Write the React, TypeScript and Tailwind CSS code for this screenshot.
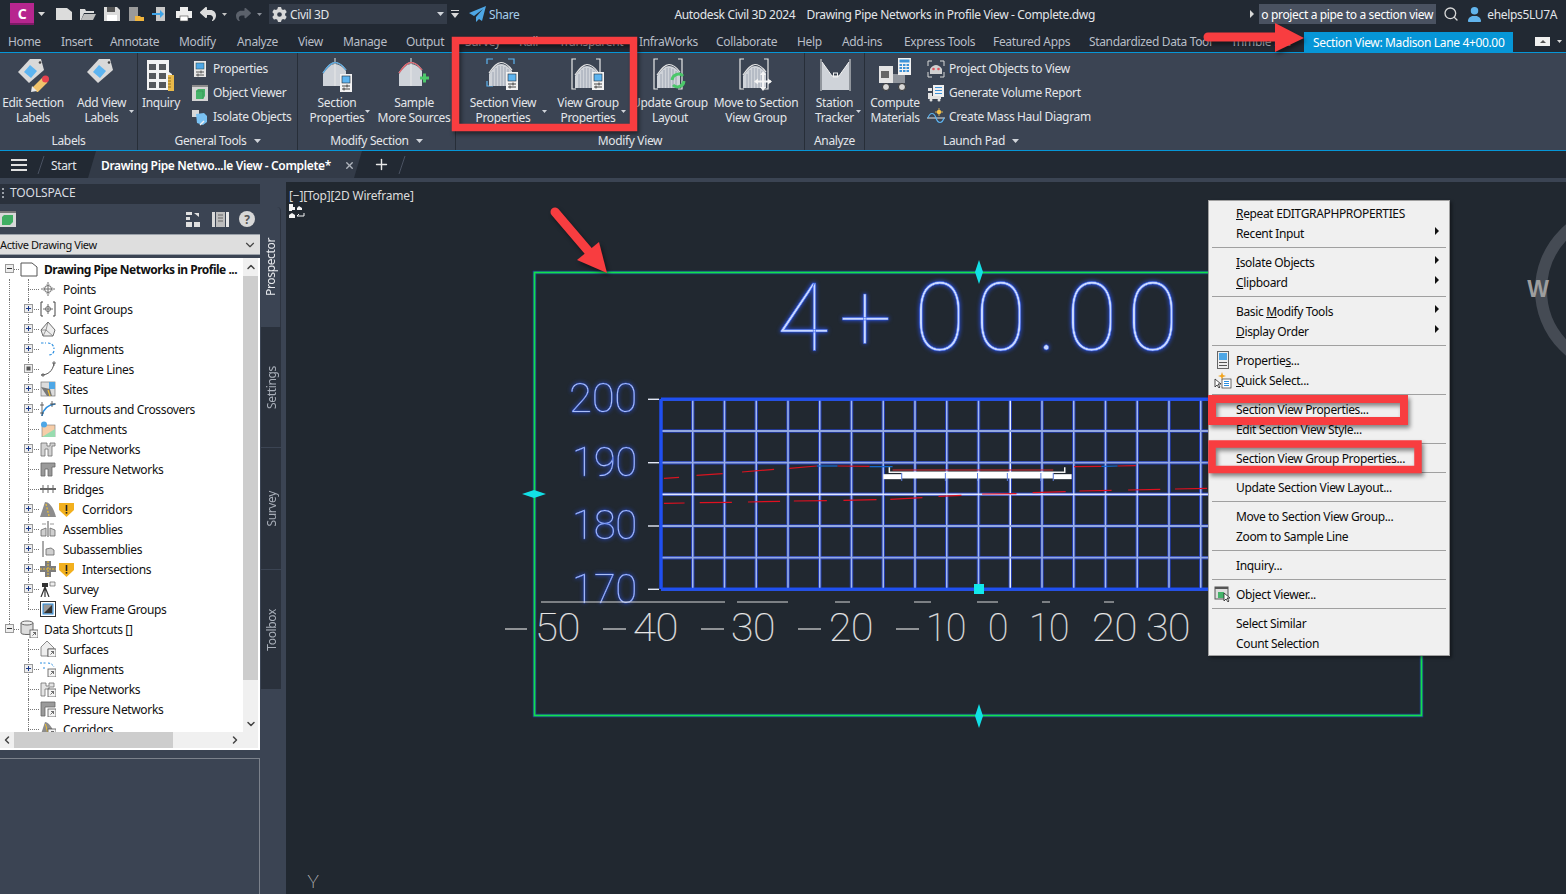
import React from "react";
import { FaGear, FaReply, FaShare, FaUser } from "react-icons/fa6";
import { ChevronDown, ChevronUp, ChevronLeft, ChevronRight, Search, X as CloseIcon, Plus } from "lucide-react";

const FONT = "font-['Noto_Sans','Liberation_Sans',sans-serif]";

/* ---------- ribbon icon pieces ---------- */
const Badge = ({ x, y }: { x: number; y: number }) => (
  <g transform={`translate(${x} ${y})`}>
    <rect width="12" height="18" fill="#f2f2f2" />
    <rect x="2" y="2" width="8" height="7" fill="#5db4f0" stroke="#1d2a38" strokeWidth=".6" />
    <path d="M2 12h8M2 15h8" stroke="#444" strokeWidth="1" />
    <path d="M7 10.5v3M4 13.5v3" stroke="#444" strokeWidth="1" />
  </g>
);
const Arch = ({ x = 0, stripes = false }: { x?: number; stripes?: boolean }) => (
  <g transform={`translate(${x} 0)`}>
    <path d="M2 28V16C7 9 10 6 14 6s8 3 11 7v15z" fill="#cfd3d9" />
    {stripes && <path d="M6 28V14M9 28V10M12 28V8M15 28V8M18 28V9M21 28V11" stroke="#8f9aa8" strokeWidth=".8" />}
    <path d="M2 15C7 8 10 4.500 14 4.500s8 3.500 11 7.500" fill="none" stroke="#e8e8e8" strokeWidth="1.200" />
  </g>
);
const Ic = ({ children, w = 34, h = 34 }: { children: React.ReactNode; w?: number; h?: number }) => (
  <svg width={w} height={h} viewBox={`0 0 ${w} ${h}`} className="block shrink-0">{children}</svg>
);
const Tag = ({ pencil }: { pencil?: boolean }) => (
  <Ic>
    <path d="M25 1 28 12 13 25 2 14 14 1z" fill="#d9d9d9" />
    <path d="M14 7 21 13 15 20 8 14z" fill="#5db4f0" />
    <circle cx="24" cy="4.500" r="1.300" fill="#444" />
    {pencil && (
      <g>
        <path d="M29 22 19 32" stroke="#f0c36b" strokeWidth="7" />
        <path d="M16 28 21 33 15 34z" fill="#e8e8e8" />
        <circle cx="29.500" cy="21" r="3.500" fill="#e8434f" />
      </g>
    )}
  </Ic>
);
const Inquiry = () => (
  <Ic>
    <path d="M3 2h22v12l3 2v16H3z" fill="#f3f3f3" />
    {[5, 15].map((x) => [6, 15, 24].map((y) => <rect key={x + "" + y} x={x} y={y} width="7" height="6" fill="#55585c" />))}
    <rect x="24" y="17" width="6" height="16" fill="#e9b949" />
    <path d="M24 20h3M24 23h3M24 26h3M24 29h3" stroke="#7a5c18" strokeWidth=".8" />
  </Ic>
);
const SectionIc = () => (
  <Ic>
    <Arch x={1} />
    <path d="M15 0v28" stroke="#e8e8e8" strokeWidth="1" />
    <path d="M3 15C8 8 11 4.500 15 4.500s8 3.500 11 7.500" fill="none" stroke="#4aa3e0" strokeWidth="1.200" />
    <Badge x={20} y={16} />
  </Ic>
);
const SampleIc = () => (
  <Ic>
    <Arch x={0} />
    <path d="M14 0v28" stroke="#e8e8e8" strokeWidth="1" />
    <path d="M2 15C7 8 10 4.500 14 4.500s8 3.500 11 7.500" fill="none" stroke="#e0555f" strokeWidth="1.200" />
    <path d="M23 20h9M27.500 15.500v9" stroke="#4cc76a" strokeWidth="3" />
  </Ic>
);
const Brackets = ({ blue }: { blue?: boolean }) =>
  blue ? (
    <path d="M1 6V1h6M22 1h6v5M1 23v5h6" fill="none" stroke="#5db4f0" strokeWidth="1.200" />
  ) : (
    <path d="M5 1H1v30h4M25 1h4v30h-4" fill="none" stroke="#e8e8e8" strokeWidth="1.200" />
  );
const SVPIc = () => (
  <Ic><Brackets blue /><Arch x={1} stripes /><Badge x={20} y={14} /></Ic>
);
const VGPIc = () => (
  <Ic><Brackets /><g transform="translate(2 2)"><Arch stripes /></g><Badge x={21} y={14} /></Ic>
);
const UpdIc = () => (
  <Ic>
    <Brackets /><g transform="translate(2 2)"><Arch stripes /></g>
    <path d="M19 22a6.500 6.500 0 0 1 11-4" fill="none" stroke="#4cc76a" strokeWidth="3" />
    <path d="M31 23a6.500 6.500 0 0 1-11 4" fill="none" stroke="#4cc76a" strokeWidth="3" />
  </Ic>
);
const MoveIc = () => (
  <Ic>
    <Brackets /><g transform="translate(2 2)"><Arch stripes /></g>
    <path d="M24 16v15M17 23.500h15" stroke="#f4f4f4" strokeWidth="2" />
    <path d="M24 13l3 4h-6zM24 33l3-4h-6zM15 23.500l4-3v6zM33 23.500l-4-3v6z" fill="#f4f4f4" />
  </Ic>
);
const StationIc = () => (
  <Ic>
    <path d="M3 1v32M32 1v32" stroke="#e8e8e8" strokeWidth="1" />
    <path d="M4 4 14 18v14H4zM31 4 21 18v14h10z" fill="#cfd3d9" />
    <path d="M14 18h7v14h-7z" fill="#cfd3d9" />
    <path d="M4 4l10 14h7L31 4" fill="none" stroke="#f2f2f2" strokeWidth="1" />
    <rect x="15.500" y="15" width="4" height="4" fill="none" stroke="#f2f2f2" />
  </Ic>
);
const ComputeIc = () => (
  <Ic>
    <path d="M1 8h14v17H1z" fill="#e4e4e4" />
    <path d="M3 13h8v7H3z" fill="#666" />
    <path d="M15 16h12v9H15z" fill="#8f949c" />
    <circle cx="8" cy="29" r="3.500" fill="#d8d8d8" stroke="#333" />
    <circle cx="24" cy="29" r="3.500" fill="#d8d8d8" stroke="#333" />
    <rect x="20" y="0" width="13" height="17" fill="#f2f2f2" />
    <rect x="21.500" y="1.500" width="10" height="3" fill="#3f93d8" />
    {[21.5, 25, 28.5].map((x) => [6, 9, 12].map((y) => <rect key={x + "-" + y} x={x} y={y} width="2.500" height="2" fill="#3f93d8" />))}
  </Ic>
);

/* small ribbon icons, 18px */
const S = ({ children, s = 18 }: { children: React.ReactNode; s?: number }) => (
  <svg width={s} height={s} viewBox="0 0 18 18" className="block shrink-0">{children}</svg>
);
const PropSm = () => (
  <S>
    <rect x="3" y="1" width="12" height="16" fill="#e8e8e8" />
    <rect x="5" y="3" width="8" height="6" fill="#4ea7e6" stroke="#244" strokeWidth=".5" />
    <path d="M5 12h8M5 15h8M10 10.500v3M7 13.500v3" stroke="#555" strokeWidth="1" />
  </S>
);
const ObjSm = () => (
  <S>
    <rect x="1" y="1" width="16" height="16" fill="#d5d5d5" />
    <rect x="1" y="1" width="16" height="2" fill="#8c8c8c" />
    <path d="M5 7l2-2h7v7l-2 3H5z" fill="#46b36a" />
    <path d="M5 7h7v8" fill="none" stroke="#2f8a4d" strokeWidth=".6" />
  </S>
);
const IsoSm = () => (
  <S>
    <rect x="1" y="2" width="7" height="7" fill="#d8d8d8" />
    <path d="M5 6l8-1 3 3v6l-4 3-6-2z" fill="#79c1f2" />
    <path d="M9 17l4-4" stroke="#f1f1f1" strokeWidth="1.500" />
  </S>
);
const ProjSm = () => (
  <S>
    <path d="M1 6V1h4M13 1h4v5M1 12v5h4M13 17h4v-5" fill="none" stroke="#d8d8d8" strokeWidth="1" />
    <path d="M3 14V9c2-3 4-4 6-4s4 1 6 4v5z" fill="#d0d0d0" />
    <circle cx="6.500" cy="9" r="1.300" fill="#e0555f" />
    <circle cx="11.500" cy="9" r="1.300" fill="#e0555f" />
  </S>
);
const GenSm = () => (
  <S>
    <rect x="6" y="1" width="11" height="12" fill="#f0f0f0" />
    <path d="M8 3.500h7M8 6.500h7M8 9.500h7" stroke="#3f93d8" strokeWidth="1.200" />
    <path d="M1 4h4v3H1zM1 9h4v6H1zM5 12h9v3H5z" fill="#e2e2e2" />
    <circle cx="4" cy="16" r="1.500" fill="#e2e2e2" />
    <circle cx="12" cy="16" r="1.500" fill="#e2e2e2" />
  </S>
);
const HaulSm = () => (
  <S>
    <path d="M0 10h18" stroke="#e2e2e2" strokeWidth="1" />
    <path d="M1 10c2-6 6-6 8 0 2 6 6 6 8 0" fill="none" stroke="#5db4f0" strokeWidth="1.200" />
    <circle cx="12" cy="4" r="2.200" fill="#f5c34b" />
    <path d="M12 0v8M8 4h8" stroke="#f5c34b" strokeWidth=".8" />
  </S>
);

/* ---------- ribbon structure ---------- */
const Caret = () => (
  <svg width="7" height="4" viewBox="0 0 7 4" className="inline-block"><path d="M0 0h7L3.500 4z" fill="#d0d4da" /></svg>
);
const Big = ({ w, icon, a, b, drop, dx = "right-[2px]" }: { w: string; icon: React.ReactNode; a: string; b: string; drop?: boolean; dx?: string }) => (
  <div className={`relative flex flex-col items-center ${w}`}>
    {icon}
    <div className="mt-[3px] whitespace-nowrap text-center">{a}</div>
    <div className="whitespace-nowrap text-center">{b}</div>
    {drop && <span className={`absolute top-[52px] leading-none ${dx}`}><svg width="5" height="3" viewBox="0 0 5 3" className="block"><path d="M0 0h5L2.500 3z" fill="#d0d4da" /></svg></span>}
  </div>
);
const Small = ({ icon, t }: { icon: React.ReactNode; t: string }) => (
  <div className="flex h-6 items-center gap-[4px] whitespace-nowrap">{icon}<span className="-mt-[1px]">{t}</span></div>
);
const Group = ({ w, label, caret, children, last }: { w: string; label: string; caret?: boolean; children: React.ReactNode; last?: boolean }) => (
  <div className={`flex h-full flex-col ${w} ${last ? "" : "border-r border-[#272e38]"}`}>
    <div className="flex flex-1 pt-[5px]">{children}</div>
    <div className="flex h-[18px] items-center justify-center gap-[7px] pb-[1px]">
      <span>{label}</span>{caret && <Caret />}
    </div>
  </div>
);

const tabs = [
  ["Home", "w-[53px]"], ["Insert", "w-[49px]"], ["Annotate", "w-[69px]"], ["Modify", "w-[58px]"],
  ["Analyze", "w-[61px]"], ["View", "w-[45px]"], ["Manage", "w-[63px]"], ["Output", "w-[59px]"],
  ["Survey", "w-[54px]"], ["Rail", "w-[40px]"], ["Transparent", "w-[80px]"], ["InfraWorks", "w-[77px]"],
  ["Collaborate", "w-[81px]"], ["Help", "w-[45px]"], ["Add-ins", "w-[62px]"], ["Express Tools", "w-[89px]"],
  ["Featured Apps", "w-[96px]"], ["Standardized Data Tool", "w-[142px]"], ["Trimble Ltd", "w-[73px]"],
];

/* ---------- tree ---------- */
const T = ({ children }: { children: React.ReactNode }) => (
  <svg width="16" height="16" viewBox="0 0 16 16" className="block shrink-0">{children}</svg>
);
const G = "#6f6f6f";
const PointI = () => <T><circle cx="8" cy="8" r="3.500" fill="none" stroke={G} /><path d="M8 1v14M1 8h14" stroke={G} /><path d="M8 1l2 3H6zM8 15l2-3H6zM1 8l3-2v4zM15 8l-3-2v4z" fill="#bbb" /></T>;
const GroupI = () => <T><path d="M3 1H1v14h2M13 1h2v14h-2" fill="none" stroke="#444" /><circle cx="8" cy="8" r="2.500" fill="none" stroke={G} /><path d="M8 3v10M3 8h10" stroke={G} /></T>;
const SurfI = () => <T><path d="M8 1 15 9l-2 6H3L1 9z" fill="#eee" stroke={G} /><path d="M8 1 6 9l7 6M6 9 3 15M1 9h5" fill="none" stroke={G} strokeWidth=".7" /></T>;
const AlignI = () => <T><path d="M1 2h5M8 2c4 0 6 3 6 6M14 10c-1 3-3 4-6 4" fill="none" stroke="#2a8ee0" strokeWidth="1.200" strokeDasharray="2.500 1.500" /></T>;
const FeatI = () => <T><path d="M1 14c7 0 12-4 13-12" fill="none" stroke="#555" /><path d="M14 0v5M12 2h4M3 12v4M1 14h4" stroke="#555" strokeWidth=".8" /></T>;
const SiteI = () => <T><rect x="1" y="1" width="14" height="14" fill="#ddd" stroke="#777" strokeWidth=".7" /><path d="M9 1h6v7H9z" fill="#4ea7e6" /><path d="M1 6l9 2 2 7H7z" fill="#777" /><path d="M8 9l2 6" stroke="#f2c230" strokeWidth="1.200" /></T>;
const TurnI = () => <T><path d="M2 15C3 8 8 4 15 3" fill="none" stroke="#2a8ee0" strokeWidth="1.500" /><path d="M2 1v14M0 4h4M0 12h4M12 0v6M10 3h6" stroke="#444" strokeWidth=".8" /></T>;
const CatchI = () => <T><rect x="2" y="4" width="13" height="12" fill="#f6cda8" stroke="#777" strokeWidth=".6" /><path d="M2 16 15 8v8z" fill="#98dcb0" /><circle cx="4" cy="3.500" r="3" fill="#4ea7e6" /></T>;
const PipeI = () => <T><path d="M1 2h6v3h3V2h5v3h-3v10h-4V8H5v7H1z" fill="#d2d2d2" stroke={G} strokeWidth=".8" /></T>;
const PressI = () => <T><path d="M1 2h14v4h-3v9H8V8H5v7H1z" fill="#9a9a9a" stroke="#666" strokeWidth=".8" /></T>;
const BridgeI = () => <T><path d="M0 8h16" stroke="#666" strokeWidth="2" /><path d="M3 4v8M8 4v8M13 4v8" stroke="#666" /></T>;
const CorrI = () => <T><path d="M0 16 5 1c5 0 9 7 11 15z" fill="#8c8c8c" /><path d="M6 3l3 12" stroke="#f2c230" strokeWidth="1.200" strokeDasharray="2 1.500" /></T>;
const AsmI = () => <T><path d="M8 0v16" stroke="#555" /><path d="M1 9l5-2v8H1zM15 9l-5-2v8h5z" fill="#cfcfcf" stroke="#666" strokeWidth=".8" /><path d="M2 3h4M10 3h4" stroke="#999" /></T>;
const SubI = () => <T><path d="M3 0v16" stroke="#555" /><path d="M6 8l5-1 3 2v5H6z" fill="#cfcfcf" stroke="#666" strokeWidth=".8" /></T>;
const InterI = () => <T><path d="M5 0h6v5h5v6h-5v5H5v-5H0V5h5z" fill="#7d7d7d" /><path d="M8 0v16M0 8h16" stroke="#f2c230" strokeWidth="1" strokeDasharray="2 1" /></T>;
const SurvI = () => <T><path d="M5 6 1 16M5 6l4 10M5 6v10" stroke="#333" strokeWidth="1.200" /><rect x="2" y="2" width="6" height="4" fill="#333" /><path d="M10 1h5v4h-5z" fill="#eee" stroke="#666" strokeWidth=".7" /></T>;
const FrameI = () => <T><rect x=".5" y=".5" width="15" height="15" fill="#fff" stroke="#333" /><rect x="3" y="3" width="10" height="10" fill="#999" stroke="#2a8ee0" /><path d="M4 12 12 4v8z" fill="#333" /></T>;
const Arrow = () => <g><rect x="8" y="8" width="8" height="8" fill="#f4f4f4" stroke="#555" strokeWidth=".8" /><path d="M10.500 13.500l3-3M11 10.500h2.500V13" fill="none" stroke="#333" strokeWidth=".7" /></g>;
const DSurf = () => <T><path d="M7 0l7 7v1H8v7H1V6z" fill="#eee" stroke={G} strokeWidth=".8" /><Arrow /></T>;
const DAlign = () => <T><path d="M0 2h7M8 2c3 0 5 2 6 4M3 7h3" fill="none" stroke="#2a8ee0" strokeDasharray="2 1.500" /><Arrow /></T>;
const DPipe = () => <T><path d="M1 2h5v3h3V2h5v4H9v2H5v7H1z" fill="#e4e4e4" stroke={G} strokeWidth=".8" /><Arrow /></T>;
const DPress = () => <T><path d="M1 1h14v5H5v9H1z" fill="#9a9a9a" stroke="#666" strokeWidth=".8" /><Arrow /></T>;
const DCorr = () => <T><path d="M0 16 5 1c3 0 6 4 8 8H8v7z" fill="#8c8c8c" /><path d="M5.500 3l2 8" stroke="#f2c230" /><Arrow /></T>;
const Shield = () => (
  <svg width="15" height="15" viewBox="0 0 15 15" className="block shrink-0">
    <path d="M0 1h15v7l-7.500 7L0 8z" fill="#f2b01e" />
    <path d="M7.500 3v6" stroke="#222" strokeWidth="1.600" /><rect x="6.700" y="10" width="1.600" height="1.600" fill="#222" />
  </svg>
);

type Row = { t: string; e?: "p" | "d"; i: React.ReactNode; w?: boolean };
const rootRows: Row[] = [
  { t: "Points", i: <PointI /> }, { t: "Point Groups", e: "p", i: <GroupI /> }, { t: "Surfaces", e: "p", i: <SurfI /> },
  { t: "Alignments", e: "p", i: <AlignI /> }, { t: "Feature Lines", e: "d", i: <FeatI /> }, { t: "Sites", e: "p", i: <SiteI /> },
  { t: "Turnouts and Crossovers", e: "p", i: <TurnI /> }, { t: "Catchments", i: <CatchI /> }, { t: "Pipe Networks", e: "p", i: <PipeI /> },
  { t: "Pressure Networks", i: <PressI /> }, { t: "Bridges", i: <BridgeI /> }, { t: "Corridors", e: "p", i: <CorrI />, w: true },
  { t: "Assemblies", e: "p", i: <AsmI /> }, { t: "Subassemblies", e: "p", i: <SubI /> }, { t: "Intersections", e: "p", i: <InterI />, w: true },
  { t: "Survey", e: "p", i: <SurvI /> }, { t: "View Frame Groups", i: <FrameI /> },
];
const shortRows: Row[] = [
  { t: "Surfaces", i: <DSurf /> }, { t: "Alignments", e: "p", i: <DAlign /> }, { t: "Pipe Networks", i: <DPipe /> },
  { t: "Pressure Networks", i: <DPress /> }, { t: "Corridors", i: <DCorr /> },
];
const Exp = ({ k }: { k?: "p" | "d" | "m" }) => (
  <svg width="9" height="9" viewBox="0 0 9 9" className="block">
    <rect x=".5" y=".5" width="8" height="8" fill="#eee" stroke="#9a9a9a" />
    {k === "p" && <path d="M2 4.500h5M4.500 2v5" stroke="#1a3a8a" />}
    {k === "m" && <path d="M2 4.500h5" stroke="#333" />}
    {k === "d" && <rect x="2.500" y="2.500" width="4" height="4" fill="#555" />}
  </svg>
);
const TreeRow = ({ r, root, last }: { r: Row; root: boolean; last?: boolean }) => (
  <div className="flex h-5 items-center whitespace-nowrap text-[#111]">
    <div className="h-5 w-[28px] shrink-0 pl-[9px]">
      {root && <div className="h-full border-l border-dotted border-[#777]" />}
    </div>
    <div className="relative h-5 w-[12px] shrink-0">
      <div className={`${last ? "h-[10px]" : "h-5"} border-l border-dotted border-[#777]`} />
      <div className="absolute left-0 top-[10px] w-[11px] border-t border-dotted border-[#777]" />
      {r.e && <div className="absolute -left-[4px] top-[5px]"><Exp k={r.e} /></div>}
    </div>
    {r.i}
    {r.w ? (
      <><span className="ml-[3px]"><Shield /></span><span className="ml-[8px]">{r.t}</span></>
    ) : (
      <span className="ml-[7px]">{r.t}</span>
    )}
  </div>
);
const RootRow = ({ label, bold, icon, connect }: { label: string; bold?: boolean; icon: React.ReactNode; connect?: boolean }) => (
  <div className="flex h-5 items-center whitespace-nowrap text-[#111]">
    <div className="relative h-5 w-[20px] shrink-0">
      <div className={`absolute left-[9px] top-0 border-l border-dotted border-[#777] ${connect ? "h-[5px]" : "hidden"}`} />
      <div className="absolute left-[5px] top-[5px]"><Exp k="m" /></div>
      <div className="absolute left-[14px] top-[10px] w-[5px] border-t border-dotted border-[#777]" />
    </div>
    {icon}
    <span className={`ml-[3px] ${bold ? "font-bold tracking-[-0.5px]" : ""}`}>{label}</span>
  </div>
);

/* ---------- context menu ---------- */
type M = { t?: React.ReactNode; sub?: boolean; icon?: React.ReactNode } | null;
function PropMenu() {
  return (
    <S>
      <rect x="3.500" y=".5" width="11" height="17" fill="#eee" stroke="#666" />
      <rect x="5" y="2" width="8" height="7" fill="#4ea7e6" />
      <path d="M5 11.500h8M5 14.500h8" stroke="#555" />
    </S>
  );
}
function QuickMenu() {
  return (
    <S>
      <path d="M1 8v8l2-2 2 3 1-1-2-3h3z" fill="#fff" stroke="#222" strokeWidth=".8" />
      <path d="M8 1l1 3 3 1-3 1-1 3-1-3-3-1 3-1z" fill="#f2a51e" />
      <rect x="8" y="8" width="9" height="9" fill="#fff" stroke="#333" strokeWidth=".7" />
      <path d="M10 10.500h5M10 12.500h5M10 14.500h5" stroke="#2a8ee0" />
    </S>
  );
}
function ObjMenu() {
  return (
    <S>
      <rect x="1" y="2" width="13" height="12" fill="#ddd" stroke="#555" />
      <rect x="1" y="2" width="13" height="2" fill="#555" />
      <path d="M4 7h6v6H4z" fill="#46b36a" />
      <path d="M10 8v8l2-2 2 3 1-1-2-3h3z" fill="#fff" stroke="#222" strokeWidth=".8" />
    </S>
  );
}
const menu: M[] = [
  { t: <><u>R</u>epeat EDITGRAPHPROPERTIES</> }, { t: "Recent Input", sub: true }, null,
  { t: <><u>I</u>solate Objects</>, sub: true }, { t: <><u>C</u>lipboard</>, sub: true }, null,
  { t: <>Basic <u>M</u>odify Tools</>, sub: true }, { t: <><u>D</u>isplay Order</>, sub: true }, null,
  { t: <>Propertie<u>s</u>...</>, icon: <PropMenu /> }, { t: <><u>Q</u>uick Select...</>, icon: <QuickMenu /> }, null,
  { t: "Section View Properties..." }, { t: "Edit Section View Style..." }, null,
  { t: "Section View Group Properties..." }, null,
  { t: "Update Section View Layout..." }, null,
  { t: "Move to Section View Group..." }, { t: "Zoom to Sample Line" }, null,
  { t: "Inquiry..." }, null,
  { t: "Object Viewer...", icon: <ObjMenu /> }, null,
  { t: "Select Similar" }, { t: "Count Selection" },
];

/* ---------- drawing ---------- */
const PX = (p: number) => 500 + p / 2.178;
const PY = (p: number) => 370 + p / 3;
const gridH = [399.3, 431, 462.7, 494.3, 526, 557.7, 589.3];
const gridV = Array.from({ length: 18 }, (_, i) => 661 + 31.75 * i);
const redTop = [[357, 325, 390, 322], [428, 316, 485, 311], [527, 306, 597, 298], [630, 295, 690, 288], [735, 288, 805, 289], [1250, 290, 1310, 289], [1345, 288, 1385, 287]];
const blueTop = [[690, 288, 735, 288], [805, 290, 855, 290], [1310, 289, 1345, 288]];
const redLow = [[357, 400, 402, 399], [435, 398, 505, 397], [540, 396, 610, 394], [640, 393, 712, 392], [748, 391, 820, 389], [850, 388, 920, 383], [955, 379, 1005, 376], [1050, 372, 1125, 371], [1160, 368, 1232, 365], [1262, 363, 1332, 361], [1368, 360, 1438, 358], [1470, 357, 1540, 355]];
const botTicks = [[541, 725], [737, 788], [835, 850], [914, 931], [977, 998], [1042, 1050], [1104, 1114]];
const botLabels: [string, number, number][] = [["50", 535, 45], ["40", 633, 45], ["30", 731, 44], ["20", 829, 44], ["10", 926, 40], ["0", 988, 20], ["10", 1029, 40], ["20", 1092, 45], ["30", 1146, 44]];
const botDash = [[505, 527], [603, 626], [701, 724], [798, 821], [896, 919]];
const txt = "font-['Roboto','Liberation_Sans',sans-serif]";

const Drawing = () => (
  <svg viewBox="286 182 1280 712" className="absolute inset-0 h-full w-full">
    {/* compass */}
    <circle cx="1620" cy="290" r="79" fill="none" stroke="#454b54" strokeWidth="12" />
    <text x="1538" y="297" textAnchor="middle" fontSize="23" fontWeight="700" fill="#9e9e9e" className="font-['Liberation_Sans',sans-serif]">W</text>
    {/* extents frame */}
    <rect x="534.500" y="272.500" width="887" height="443" fill="none" stroke="#203a90" strokeWidth="3.500" />
    <rect x="534.500" y="272.500" width="887" height="443" fill="none" stroke="#12e04a" strokeWidth="1.800" />
    {/* title */}
    <text y="350" x="777 839 914 975 1037 1066 1127" fontSize="94" fontWeight="100" fill="#c8d8ff" stroke="#2a55e8" strokeWidth=".5" className={`${txt} drop-shadow-[0_0_2px_#2a55ff]`}>4+00.00</text>
    {/* grid */}
    {gridV.map((x) => <path key={x} d={`M${x} 399V589`} stroke="#233cb0" strokeWidth="3.500" />)}
    {gridH.map((y) => <path key={y} d={`M661 ${y}H1210`} stroke="#233cb0" strokeWidth="3.500" />)}
    {gridV.map((x, i) => <path key={x} d={`M${x} 399V589`} stroke={i === 11 ? "#e4ecff" : "#a3b8ee"} strokeWidth="1.500" />)}
    {gridH.map((y, i) => <path key={y} d={`M661 ${y}H1210`} stroke={i === 3 ? "#dfe6ff" : "#93a8e0"} strokeWidth="1.800" />)}
    <path d="M661 399.300H1210M661 589.300H1210M661 399V589" stroke="#1f50f0" strokeWidth="3" />
    {[399.3, 462.7, 526, 589.3].map((y) => <path key={y} d={`M648 ${y}H659`} stroke="#e4e8f4" strokeWidth="1.400" />)}
    {/* axis labels */}
    {([["200", 412, 569, 68], ["190", 476, 572, 65], ["180", 539, 572, 65], ["170", 603, 572, 65]] as [string, number, number, number][]).map(([t, y, x, w]) => (
      <text key={t} x={x} y={y} textLength={w} lengthAdjust="spacingAndGlyphs" fontSize="40" fontWeight="100" fill="#d4e0ff" stroke="#3a62e8" strokeWidth=".35" className={`${txt} drop-shadow-[0_0_2px_#2a55ff]`}>{t}</text>
    ))}
    {/* section lines */}
    {redTop.map((s, i) => <path key={i} d={`M${PX(s[0])} ${PY(s[1])}L${PX(s[2])} ${PY(s[3])}`} stroke="#d81420" strokeWidth="1.200" />)}
    {blueTop.map((s, i) => <path key={i} d={`M${PX(s[0])} ${PY(s[1])}L${PX(s[2])} ${PY(s[3])}`} stroke="#1670d8" strokeWidth="1.200" />)}
    {redLow.map((s, i) => <path key={i} d={`M${PX(s[0])} ${PY(s[1])}L${PX(s[2])} ${PY(s[3])}`} stroke="#e01020" strokeWidth="1.200" />)}
    {/* road */}
    <path d={`M${PX(848)} ${PY(292)}v5h${(1230 - 848) / 2.178}v-5`} fill="none" stroke="#f4f4f4" strokeWidth="1.500" />
    <path d={`M${PX(855)} ${PY(300)}H${PX(1205)}`} stroke="#e02a30" strokeWidth="1" />
    <path d={`M${PX(835)} ${PY(320)}H${PX(875)}`} stroke="#fff" strokeWidth="5" />
    <path d={`M${PX(875)} ${PY(316)}H${PX(1205)}`} stroke="#fff" strokeWidth="6.500" />
    <path d={`M${PX(1205)} ${PY(320)}H${PX(1245)}`} stroke="#fff" strokeWidth="5" />
    {[875, 970, 1040, 1105, 1178, 1205].map((p) => <path key={p} d={`M${PX(p)} 473V481`} stroke="#5f7fe0" strokeWidth="1" />)}
    {/* bottom axis */}
    {botTicks.map((t) => <path key={t[0]} d={`M${t[0]} 602H${t[1]}`} stroke="#d8d8d8" strokeWidth="1" />)}
    {botDash.map((t) => <path key={t[0]} d={`M${t[0]} 629H${t[1]}`} stroke="#dcdcdc" strokeWidth="1.200" />)}
    {botLabels.map(([t, x, w], i) => (
      <text key={i} x={x} y="641" textLength={w} lengthAdjust="spacingAndGlyphs" fontSize="38" fontWeight="100" fill="#e6e6e6" stroke="#e6e6e6" strokeWidth=".2" className={txt}>{t}</text>
    ))}
    {/* grips */}
    <path d="M979 260l4 12-4 12-4-12zM979 704l4 12-4 12-4-12zM522 494l12-4 12 4-12 4z" fill="#12e0e6" />
    <rect x="974" y="584" width="10" height="10" fill="#12e8ec" />
    {/* UCS */}
    <text x="313" y="888" textAnchor="middle" fontSize="19" fontWeight="100" fill="#e6e6e6" className={txt}>Y</text>
  </svg>
);

const Annotations = () => (
  <svg viewBox="0 0 1566 894" className="pointer-events-none absolute inset-0 h-full w-full drop-shadow-[2px_3px_2px_rgba(0,0,0,0.45)]">
    <rect x="455.500" y="40.500" width="178" height="87" fill="none" stroke="#f83d40" strokeWidth="7.500" />
    <rect x="1212" y="399" width="192" height="22" fill="none" stroke="#f83d40" strokeWidth="8" />
    <rect x="1212" y="444" width="206" height="25.500" fill="none" stroke="#f83d40" strokeWidth="7.500" />
    <path d="M1208 37H1280" stroke="#f83d40" strokeWidth="9" strokeLinecap="round" />
    <path d="M1275 23 1304 38 1275 52z" fill="#f83d40" />
    <path d="M555 212 590 253" stroke="#f83d40" strokeWidth="9" strokeLinecap="round" />
    <path d="M577 260 599 242 607 273z" fill="#f83d40" />
  </svg>
);

/* ---------- QAT ---------- */
const Q = ({ children }: { children: React.ReactNode }) => (
  <svg width="16" height="16" viewBox="0 0 16 16" className="block shrink-0">{children}</svg>
);
const VTab = ({ t, active, h }: { t: string; active?: boolean; h: string }) => (
  <div className={`flex w-[20px] items-center justify-center ${h} ${active ? "rounded-tr-[4px] border-r border-[#2d3440] bg-[#3b4453] text-[#e6e8ec]" : "border-b border-[#3b4453] bg-[#2a313c] text-[#a8aeb8]"}`}>
    <span className="rotate-180 [writing-mode:vertical-rl]">{t}</span>
  </div>
);

export default function App() {
  return (
    <div className={`relative flex h-[894px] w-[1566px] flex-col overflow-hidden bg-[#3b4453] text-[12px] leading-[15px] tracking-[-0.35px] text-[#e3e6ea] ${FONT}`}>
      {/* title bar */}
      <div className="flex h-[29px] items-center bg-[#222933] pb-[1px]">
        <div className="ml-[10px] flex h-[22px] w-[24px] items-center justify-center border-b-2 border-[#7d1a66] bg-[#b7268f] text-[14px] font-bold text-white">C</div>
        <svg width="7" height="4" viewBox="0 0 7 4" className="ml-[4px]"><path d="M0 0h7L3.500 4z" fill="#d8d8d8" /></svg>
        <div className="ml-[11px] flex items-center gap-[8px]">
          <Q><path d="M0 2h11l5 4v8H0z" fill="#dcdcdc" /></Q>
          <Q><path d="M0 3h5l1 2h8v2H4l-3 7H0z" fill="#dcdcdc" /><path d="M4 8h12l-3 6H1z" fill="#bdbdbd" /></Q>
          <Q><path d="M0 1h13l3 3v11H0z" fill="#dcdcdc" /><rect x="3" y="1" width="8" height="5" fill="#555" /><rect x="3" y="9" width="10" height="6" fill="#fff" /></Q>
          <Q><path d="M1 1h9v14H1z" fill="#9a9a9a" /><path d="M7 10h5l1 1h3v4H7z" fill="#f0b43c" /></Q>
          <Q><path d="M4 1h9v14H4z" fill="#c8c8c8" /><path d="M0 7h8V4l4 4-4 4V9H0z" fill="#3da3e8" /></Q>
          <Q><rect x="4" y="1" width="8" height="4" fill="#eee" /><rect x="0" y="5" width="16" height="7" fill="#eee" /><rect x="4" y="10" width="8" height="5" fill="#fff" stroke="#444" strokeWidth=".6" /></Q>
          <FaReply size={16} color="#dcdcdc" />
        </div>
        <svg width="5" height="3" viewBox="0 0 5 3" className="ml-[6px]"><path d="M0 0h5L2.500 3z" fill="#c4c4c4" /></svg>
        <FaShare size={15} color="#5b616b" className="ml-[9px]" />
        <svg width="5" height="3" viewBox="0 0 5 3" className="ml-[6px]"><path d="M0 0h5L2.500 3z" fill="#8a8f98" /></svg>
        <div className="ml-[7px] flex h-[20px] w-[178px] items-center gap-[3px] bg-[#343c49] pl-[3px] pr-[3px]">
          <FaGear size={15} color="#d8d8d8" />
          <span className="flex-1">Civil 3D</span>
          <Caret />
        </div>
        <svg width="8" height="8" viewBox="0 0 8 8" className="ml-[4px]"><path d="M0 0h8v1H0zM0 3h8L4 8z" fill="#d8d8d8" /></svg>
        <svg width="17" height="16" viewBox="0 0 17 16" className="ml-[10px]"><path d="M17 0 0 7l5 3 9-7-7 8v5l3-3 3 2z" fill="#4ea7e6" /></svg>
        <span className="ml-[3px] text-[#a6cdea]">Share</span>
        <div className="ml-[155px] w-[132px] whitespace-nowrap">Autodesk Civil 3D 2024</div>
        <div className="whitespace-nowrap">Drawing Pipe Networks in Profile View - Complete.dwg</div>
        <div className="flex-1" />
        <svg width="4" height="8" viewBox="0 0 4 8"><path d="M0 0l4 4-4 4z" fill="#d8d8d8" /></svg>
        <div className="ml-[5px] flex h-[20px] w-[177px] items-center overflow-hidden bg-[#4a5261] pl-[2px] whitespace-nowrap text-white">o project a pipe to a section view</div>
        <Search size={16} color="#d8d8d8" className="ml-[7px]" />
        <FaUser size={15} color="#62b4ec" className="ml-[8px]" />
        <span className="ml-[5px] mr-[9px] whitespace-nowrap">ehelps5LU7A</span>
      </div>

      {/* ribbon tabs */}
      <div className="flex h-[24px] items-center border-b border-[#0696d7] bg-[#222933] pl-[8px] pt-[2px]">
        {tabs.map(([t, w]) => (
          <div key={t} className={`${w} whitespace-nowrap text-[#b8bec7]`}>{t}</div>
        ))}
        <div className="flex h-[20px] w-[209px] items-center self-end bg-[#0696d7] pl-[9px] whitespace-nowrap text-white">Section View: Madison Lane 4+00.00</div>
        <div className="ml-[22px] flex h-[9px] w-[15px] items-center justify-center bg-[#f0f0f0]">
          <svg width="6" height="3" viewBox="0 0 6 3"><path d="M0 3h6L3 0z" fill="#555" /></svg>
        </div>
        <svg width="5" height="3" viewBox="0 0 5 3" className="ml-[7px]"><path d="M0 0h5L2.500 3z" fill="#d8d8d8" /></svg>
      </div>

      {/* ribbon */}
      <div className="flex h-[98px] border-b border-[#0696d7] bg-[#3b4453]">
        <Group w="w-[138px]" label="Labels">
          <Big w="w-[66px]" icon={<Tag pencil />} a="Edit Section" b="Labels" />
          <Big w="w-[71px]" icon={<Tag />} a="Add View" b="Labels" drop dx="right-[3px]" />
        </Group>
        <Group w="w-[160px]" label="General Tools" caret>
          <Big w="w-[46px]" icon={<Inquiry />} a="Inquiry" b="" />
          <div className="ml-[7px] -mt-[1px]">
            <Small icon={<PropSm />} t="Properties" />
            <Small icon={<ObjSm />} t="Object Viewer" />
            <Small icon={<IsoSm />} t="Isolate Objects" />
          </div>
        </Group>
        <Group w="w-[158px]" label="Modify Section" caret>
          <Big w="w-[78px]" icon={<SectionIc />} a="Section" b="Properties" drop dx="right-[6px]" />
          <Big w="w-[76px]" icon={<SampleIc />} a="Sample" b="More Sources" />
        </Group>
        <Group w="w-[349px]" label="Modify View">
          <Big w="w-[94px]" icon={<SVPIc />} a="Section View" b="Properties" drop dx="right-[3px]" />
          <Big w="w-[76px]" icon={<VGPIc />} a="View Group" b="Properties" drop dx="right-[0px]" />
          <Big w="w-[88px]" icon={<UpdIc />} a="Update Group" b="Layout" />
          <Big w="w-[84px]" icon={<MoveIc />} a="Move to Section" b="View Group" />
        </Group>
        <Group w="w-[60px]" label="Analyze">
          <Big w="w-[60px]" icon={<StationIc />} a="Station" b="Tracker" drop dx="right-[3px]" />
        </Group>
        <Group w="w-[232px]" label="Launch Pad" caret last>
          <Big w="w-[60px]" icon={<ComputeIc />} a="Compute" b="Materials" />
          <div className="ml-[2px] -mt-[1px]">
            <Small icon={<ProjSm />} t="Project Objects to View" />
            <Small icon={<GenSm />} t="Generate Volume Report" />
            <Small icon={<HaulSm />} t="Create Mass Haul Diagram" />
          </div>
        </Group>
      </div>

      {/* document tabs */}
      <div className="flex h-[27px] items-center bg-[#222933]">
        <div className="ml-[11px] flex w-[16px] flex-col gap-[3px]">
          <div className="h-[2px] bg-[#e0e0e0]" /><div className="h-[2px] bg-[#e0e0e0]" /><div className="h-[2px] bg-[#e0e0e0]" />
        </div>
        <svg width="8" height="18" viewBox="0 0 8 18" className="ml-[10px]"><path d="M7 0 1 18" stroke="#4a5261" /></svg>
        <span className="ml-[6px] w-[35px] pt-[1px] text-[#e3e6ea]">Start</span>
        <div className="ml-[2px] flex h-[27px] w-[274px] items-center bg-[#333b48] pl-[13px] pt-[1px] [clip-path:polygon(8px_0,100%_0,calc(100%-8px)_100%,0_100%)]">
          <span className="w-[236px] whitespace-nowrap font-semibold text-white">Drawing Pipe Netwo...le View - Complete*</span>
          <CloseIcon size={11} color="#b0b5bd" strokeWidth={3} className="ml-[7px]" />
        </div>
        <Plus size={17} color="#e8e8e8" strokeWidth={2} className="ml-[11px]" />
        <svg width="8" height="18" viewBox="0 0 8 18" className="ml-[8px]"><path d="M7 0 1 18" stroke="#4a5261" /></svg>
      </div>

      {/* main */}
      <div className="flex min-h-0 flex-1">
        {/* toolspace */}
        <div className="flex w-[286px] shrink-0 pt-[6px]">
          <div className="flex w-[260px] shrink-0 flex-col">
            <div className="flex h-[20px] items-center bg-[#2a313c] pb-[3px]">
              <span className="ml-[2px] h-[10px] w-[3px] border-l-2 border-dotted border-[#9aa0a8]" />
              <span className="ml-[5px] tracking-[-0.1px] text-[#d9dde2]">TOOLSPACE</span>
            </div>
            <div className="flex h-[30px] items-center pr-[5px]">
              <svg width="16" height="16" viewBox="0 0 16 16"><rect width="16" height="16" fill="#d8d8d8" /><rect width="16" height="2" fill="#777" /><path d="M2 6l2-2h9v7l-3 3H2z" fill="#3fae62" /></svg>
              <div className="flex-1" />
              <svg width="15" height="15" viewBox="0 0 15 15" className="mr-[11px]"><path d="M0 0h6v3H0zM0 5h4v3H0zM0 10h6v5H0zM8 10h6v5H8zM8 1h5v4" fill="#e0e0e0" /></svg>
              <svg width="17" height="15" viewBox="0 0 17 15" className="mr-[10px]"><path d="M0 0h3v15H0z" fill="#d8d8d8" /><path d="M4 0h9v15H4z" fill="#bdbdbd" /><path d="M14 0h3v15h-3z" fill="#e8e8e8" /><path d="M6 3h5M6 6h5M6 9h5" stroke="#666" /></svg>
              <div className="flex h-[16px] w-[16px] items-center justify-center rounded-full bg-[#d8d8d8] text-[12px] font-bold text-[#555]">?</div>
            </div>
            <div className="flex h-[21px] items-center justify-between border-y border-[#9aa0a8] bg-[#dedede] pr-[3px] text-[11px] tracking-[-0.4px] text-[#111]">
              <span>Active Drawing View</span>
              <ChevronDown size={14} color="#444" />
            </div>
            <div className="mt-[3px] flex h-[492px] flex-col border-b-2 border-r-2 border-white bg-white">
              <div className="flex min-h-0 flex-1">
                <div className="min-w-0 flex-1 overflow-hidden pt-px">
                  <RootRow bold label="Drawing Pipe Networks in Profile ..." icon={
                    <svg width="18" height="16" viewBox="0 0 18 16" className="block shrink-0 mr-[3px]"><path d="M1 2h11l5 4v9H1z" fill="#fff" stroke="#555" /></svg>
                  } />
                  {rootRows.map((r) => <TreeRow key={r.t} r={r} root last={r.t === "View Frame Groups"} />)}
                  <RootRow label="Data Shortcuts []" connect icon={
                    <svg width="18" height="18" viewBox="0 0 18 18" className="block shrink-0 mr-[3px]"><path d="M1 3v10c0 2 12 2 12 0V3z" fill="#ddd" stroke="#666" /><ellipse cx="7" cy="3" rx="6" ry="2" fill="#eee" stroke="#666" /><g transform="translate(2 2)"><Arrow /></g></svg>
                  } />
                  {shortRows.map((r) => <TreeRow key={r.t} r={r} root={false} />)}
                </div>
                {/* vertical scrollbar */}
                <div className="flex w-[15px] shrink-0 flex-col bg-[#f0f0f0]">
                  <div className="flex h-[18px] items-center justify-center"><ChevronUp size={12} color="#444" strokeWidth={3} /></div>
                  <div className="h-[404px] bg-[#cdcdcd]" />
                  <div className="flex flex-1 items-end justify-center pb-[2px]"><ChevronDown size={12} color="#444" strokeWidth={3} /></div>
                </div>
              </div>
              {/* horizontal scrollbar */}
              <div className="flex h-[16px] shrink-0 items-center bg-[#f0f0f0]">
                <div className="flex w-[14px] justify-center"><ChevronLeft size={12} color="#444" strokeWidth={3} /></div>
                <div className="h-full w-[159px] bg-[#cdcdcd]" />
                <div className="flex flex-1 justify-end pr-[17px]"><ChevronRight size={12} color="#444" strokeWidth={3} /></div>
              </div>
            </div>
            <div className="mt-[8px] flex-1 border-r border-t border-[#7b818b]" />
          </div>
          <div className="ml-px pt-[23px]">
            <VTab t="Prospector" active h="h-[120px]" />
            <VTab t="Settings" h="h-[121px]" />
            <VTab t="Survey" h="h-[122px]" />
            <VTab t="Toolbox" h="h-[120px]" />
          </div>
        </div>

        {/* canvas */}
        <div className="relative mt-[4px] flex-1 overflow-hidden bg-[#212830]">
          <Drawing />
          <div className="absolute left-[3px] top-[6px] whitespace-nowrap tracking-[-0.2px] text-[#dcdcdc]">[−][Top][2D Wireframe]</div>
          <svg width="16" height="15" viewBox="0 0 16 15" className="absolute left-[3px] top-[22px]">
            <path d="M0 0h4v3h2v3H3v1H0zM10 2l3 2v2H8V4zM0 11l3-2 3 2v3H0z" fill="#f4f4f4" /><path d="M8 12h7V9M8 12l2-2" fill="none" stroke="#f4f4f4" />
          </svg>

          {/* context menu */}
          <div className="absolute left-[922px] top-[18px] w-[242px] border border-[#a0a0a0] bg-[#f0f0f0] py-[2px] text-[#0b0b0b] shadow-[2px_2px_3px_rgba(0,0,0,0.4)]">
            {menu.map((m, i) =>
              m ? (
                <div key={i} className="relative flex h-5 items-center whitespace-nowrap pl-[27px]">
                  {m.icon && <span className="absolute left-[5px] top-[1px]">{m.icon}</span>}
                  <span>{m.t}</span>
                  {m.sub && <svg width="4" height="8" viewBox="0 0 4 8" className="absolute right-[10px] top-[4px]"><path d="M0 0l4 4-4 4z" fill="#111" /></svg>}
                </div>
              ) : (
                <div key={i} className="flex h-[9px] items-center px-[3px]"><div className="h-px w-full bg-[#a0a0a0]" /></div>
              )
            )}
          </div>
        </div>
      </div>
      <Annotations />
    </div>
  );
}
